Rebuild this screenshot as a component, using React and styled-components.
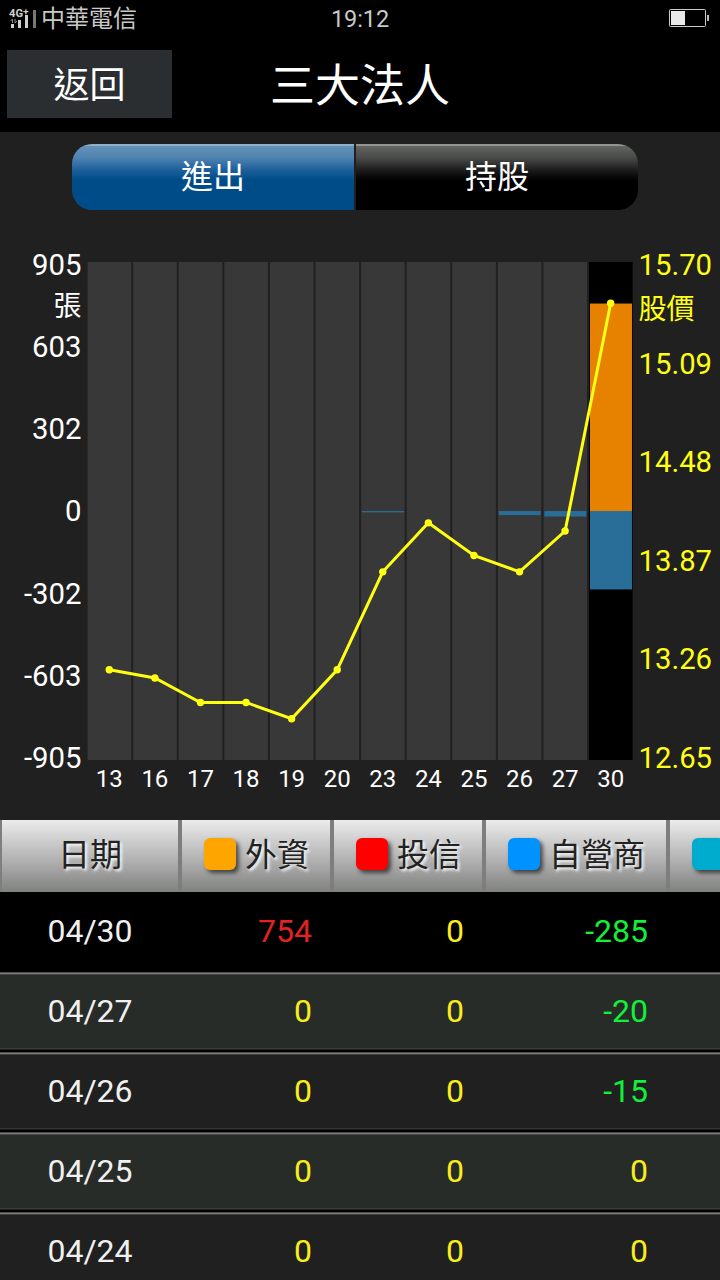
import React from "react";
import styled, { createGlobalStyle, css } from "styled-components";

const GlobalStyle = createGlobalStyle`
  * { box-sizing: border-box; }
  body {
    margin: 0;
    background: #202020;
    font-family: Roboto, "Noto Sans CJK TC", sans-serif;
    overflow: hidden;
  }
`;

const Screen = styled.div`
  width: 720px;
  height: 1280px;
  overflow: hidden;
  display: flex;
  flex-direction: column;
  background: #202020;
  color: #fff;
`;

const StatusBar = styled.div`
  height: 36px;
  flex: none;
  display: grid;
  grid-template-columns: 1fr auto 1fr;
  align-items: center;
  padding: 0 10px 0 9px;
  background: #000;
  color: #c9c9c9;
  font-size: 24px;
  line-height: 36px;
`;

const Carrier = styled.div`
  display: flex;
  align-items: center;
  gap: 4px;
`;

const CarrierName = styled.span`
  padding-top: 1px;
`;

const Clock = styled.span`
  padding-top: 1px;
  padding-left: 1px;
  font-size: 23.5px;
  letter-spacing: -0.1px;
`;

const BatterySlot = styled.div`
  display: flex;
  justify-content: flex-end;
  padding-bottom: 1px;
`;

const Header = styled.header`
  height: 96px;
  flex: none;
  display: grid;
  grid-template-columns: 165px 1fr 165px;
  align-items: start;
  padding: 14px 7px 0;
  background: #000;
`;

const BackButton = styled.button`
  height: 68px;
  border: 0;
  padding: 5px 0 0;
  background: #2a2e31;
  color: #fff;
  font: inherit;
  font-size: 36px;
  line-height: 63px;
`;

const Title = styled.h1`
  margin: 0;
  font-size: 45px;
  font-weight: 400;
  line-height: 74px;
  text-align: center;
`;

const SegmentBar = styled.div`
  height: 66px;
  flex: none;
  display: flex;
  gap: 2px;
  margin: 12px 82px 0 72px;
  border-radius: 20px;
  overflow: hidden;
`;

const Segment = styled.button`
  flex: 1;
  border: 0;
  padding: 0;
  color: #fff;
  font: inherit;
  font-size: 32px;
  line-height: 64px;
  background: ${(p) =>
    p.$active
      ? "linear-gradient(#8fb0c6 0 2px, #6392b8 2px, #4f82b0 14px, #1c5f9a 26px, #004c88 36px, #004c88)"
      : "linear-gradient(#939593 0 2px, #636563 2px, #484a48 14px, #1b1c1b 26px, #000 36px, #000)"};
`;

const ChartArea = styled.section`
  flex: none;
  height: 610px;
  display: grid;
  grid-template-columns: 87px 547px 86px;
  grid-template-rows: 498px auto;
  padding-top: 52px;
`;

const Axis = styled.div`
  display: flex;
  flex-direction: column;
  justify-content: space-between;
  margin: -14px 0 -15px;
  font-size: 29.3px;
  line-height: 34px;
  ${(p) =>
    p.$side === "left"
      ? css`
          align-items: flex-end;
          padding-right: 5.5px;
          color: #fff;
        `
      : css`
          align-items: flex-start;
          padding-left: 4.5px;
          color: #ffff14;
        `}
`;

const Tick = styled.div`
  position: relative;
  white-space: nowrap;
`;

const Unit = styled.span`
  position: absolute;
  top: ${(p) => p.$top}px;
  ${(p) => p.$side}: 0;
  font-size: 28px;
`;

const Plot = styled.svg`
  display: block;
  width: 547px;
  height: 498px;
  overflow: visible;
`;

const Days = styled.div`
  grid-column: 2;
  display: grid;
  grid-template-columns: repeat(12, 1fr);
  margin-left: -0.5px;
  margin-right: 0.5px;
  padding-top: 5px;
  font-size: 24px;
  line-height: 28px;
  text-align: center;
`;

const columns = css`
  display: grid;
  grid-template-columns: 180px 152px 152px 184px 184px;
`;

const TableHead = styled.div`
  ${columns}
  flex: none;
  height: 72px;
  background: linear-gradient(#ececec, #b9b9b9 48%, #80827f);
  color: #222;
  font-size: 32px;
  line-height: 68px;
  text-shadow: 2px 2px 3px #fff;
`;

const HeadCell = styled.div`
  display: flex;
  align-items: center;
  gap: 9px;
  padding-left: ${(p) => (p.$first ? 56 : 22)}px;
  padding-bottom: 2px;
  border-left: 2px solid #7e7e7e;
  border-right: 2px solid #7e7e7e;
  white-space: nowrap;
`;

const Swatch = styled.span`
  flex: none;
  width: 32px;
  height: 32px;
  margin-top: -2px;
  border-radius: 6px;
  background: ${(p) => p.$color};
  box-shadow: 3px 3px 4px rgba(0, 0, 0, 0.6);
`;

const rowBackground = {
  selected: "#000",
  odd: "linear-gradient(#4b4d4b 0 1px, #7c7e7c 1px 2px, #454745 2px 3px, #282c29 3px 76px, #3a3d3b 76px 77px, #222522 77px 78px, #000 78px)",
  even: "linear-gradient(#4b4d4b 0 1px, #7c7e7c 1px 2px, #3f403f 2px 3px, #202020 3px 76px, #343434 76px 77px, #1c1c1c 77px 78px, #000 78px)",
};

const Row = styled.div`
  ${columns}
  flex: none;
  height: 80px;
  background: ${(p) => rowBackground[p.$kind]};
  font-size: 32px;
  line-height: 79px;
`;

const DateCell = styled.div`
  text-align: center;
  color: #f0f0f0;
`;

const tone = (n) => (n > 0 ? "#e32222" : n < 0 ? "#12f03a" : "#f8ee1c");

const ValueCell = styled.div`
  text-align: right;
  padding-right: 20px;
  color: ${(p) => tone(p.$value)};
`;

const volumeTicks = ["905", "603", "302", "0", "-302", "-603", "-905"];
const priceTicks = ["15.70", "15.09", "14.48", "13.87", "13.26", "12.65"];

const days = [
  { day: "13", price: 13.2 },
  { day: "16", price: 13.15 },
  { day: "17", price: 13.0 },
  { day: "18", price: 13.0 },
  { day: "19", price: 12.9 },
  { day: "20", price: 13.2 },
  { day: "23", price: 13.8, dealer: -5 },
  { day: "24", price: 14.1 },
  { day: "25", price: 13.9 },
  { day: "26", price: 13.8, dealer: -15 },
  { day: "27", price: 14.05, dealer: -20 },
  { day: "30", price: 15.445, foreign: 754, dealer: -285 },
];

const rows = [
  { date: "04/30", values: [754, 0, -285] },
  { date: "04/27", values: [0, 0, -20] },
  { date: "04/26", values: [0, 0, -15] },
  { date: "04/25", values: [0, 0, 0] },
  { date: "04/24", values: [0, 0, 0] },
];

const PITCH = 45.58;
const colX = (i) => 0.6 + i * PITCH;
const centerX = (i) => 22.3 + i * PITCH;
const priceY = (p) => ((15.7 - p) / 3.05) * 498 - 0.4;
const volumeH = (v) => (Math.abs(v) / 905) * 249;

function SignalIcon() {
  return (
    <svg width="28" height="20" viewBox="0 0 28 20">
      <text x="0" y="8" fontFamily="Roboto, sans-serif" fontWeight="700" fontSize="10" textLength="14" lengthAdjust="spacingAndGlyphs" fill="#d0d0d0">4G</text>
      <path d="M14.4 2.7h5M16.9 .2v5" stroke="#d0d0d0" strokeWidth="1.3" />
      <path d="M3.5 10v4M1.5 12l2-2M6 10v4l2-2" stroke="#999" strokeWidth=".9" fill="none" />
      <path d="M2 15h3v4H2zM9 11h3v8H9zM16 6h3v13h-3z" fill="#d0d0d0" />
      <path d="M24 1h3v18h-3z" fill="#777" />
    </svg>
  );
}

function BatteryIcon() {
  return (
    <svg width="41" height="18" viewBox="0 0 41 18">
      <rect x=".5" y=".5" width="36" height="17" rx="1" fill="none" stroke="#ccc" />
      <rect x="2" y="2" width="14" height="14" fill="#e8e8e8" />
      <rect x="38" y="6" width="2" height="6" fill="#bbb" />
    </svg>
  );
}

function Chart() {
  const line = days.map((d, i) => `${centerX(i)},${priceY(d.price)}`).join(" ");
  return (
    <Plot viewBox="0 0 547 498">
      {days.map((d, i) => (
        <g key={d.day}>
          <rect x={colX(i)} y="0" width="43.6" height="498" fill={i === 11 ? "#000" : "#383838"} />
          {d.foreign && (
            <rect x={colX(i) + 1} y={249 - volumeH(d.foreign)} width="42" height={volumeH(d.foreign)} fill="#e68200" />
          )}
          {d.dealer && (
            <rect x={colX(i) + 1} y="249" width="42" height={volumeH(d.dealer)} fill="#296d99" />
          )}
        </g>
      ))}
      <polyline points={line} fill="none" stroke="#ffff14" strokeWidth="3" />
      {days.map((d, i) => (
        <circle key={d.day} cx={centerX(i)} cy={priceY(d.price)} r="3.7" fill="#ffff14" />
      ))}
    </Plot>
  );
}

export default function App() {
  return (
    <Screen>
      <GlobalStyle />
      <StatusBar>
        <Carrier>
          <SignalIcon />
          <CarrierName>中華電信</CarrierName>
        </Carrier>
        <Clock>19:12</Clock>
        <BatterySlot>
          <BatteryIcon />
        </BatterySlot>
      </StatusBar>
      <Header>
        <BackButton>返回</BackButton>
        <Title>三大法人</Title>
      </Header>
      <SegmentBar>
        <Segment $active>進出</Segment>
        <Segment>持股</Segment>
      </SegmentBar>
      <ChartArea>
        <Axis $side="left">
          {volumeTicks.map((t, i) => (
            <Tick key={t}>
              {t}
              {i === 0 && <Unit $side="right" $top={42}>張</Unit>}
            </Tick>
          ))}
        </Axis>
        <Chart />
        <Axis $side="right">
          {priceTicks.map((t, i) => (
            <Tick key={t}>
              {t}
              {i === 0 && <Unit $side="left" $top={45}>股價</Unit>}
            </Tick>
          ))}
        </Axis>
        <Days>
          {days.map((d) => (
            <span key={d.day}>{d.day}</span>
          ))}
        </Days>
      </ChartArea>
      <TableHead>
        <HeadCell $first>日期</HeadCell>
        <HeadCell><Swatch $color="#ffa500" />外資</HeadCell>
        <HeadCell><Swatch $color="#ff0000" />投信</HeadCell>
        <HeadCell><Swatch $color="#0092ff" />自營商</HeadCell>
        <HeadCell><Swatch $color="#00accd" /></HeadCell>
      </TableHead>
      {rows.map((r, i) => (
        <Row key={r.date} $kind={i === 0 ? "selected" : i % 2 ? "odd" : "even"}>
          <DateCell>{r.date}</DateCell>
          {r.values.map((v, j) => (
            <ValueCell key={j} $value={v}>{v}</ValueCell>
          ))}
        </Row>
      ))}
    </Screen>
  );
}
